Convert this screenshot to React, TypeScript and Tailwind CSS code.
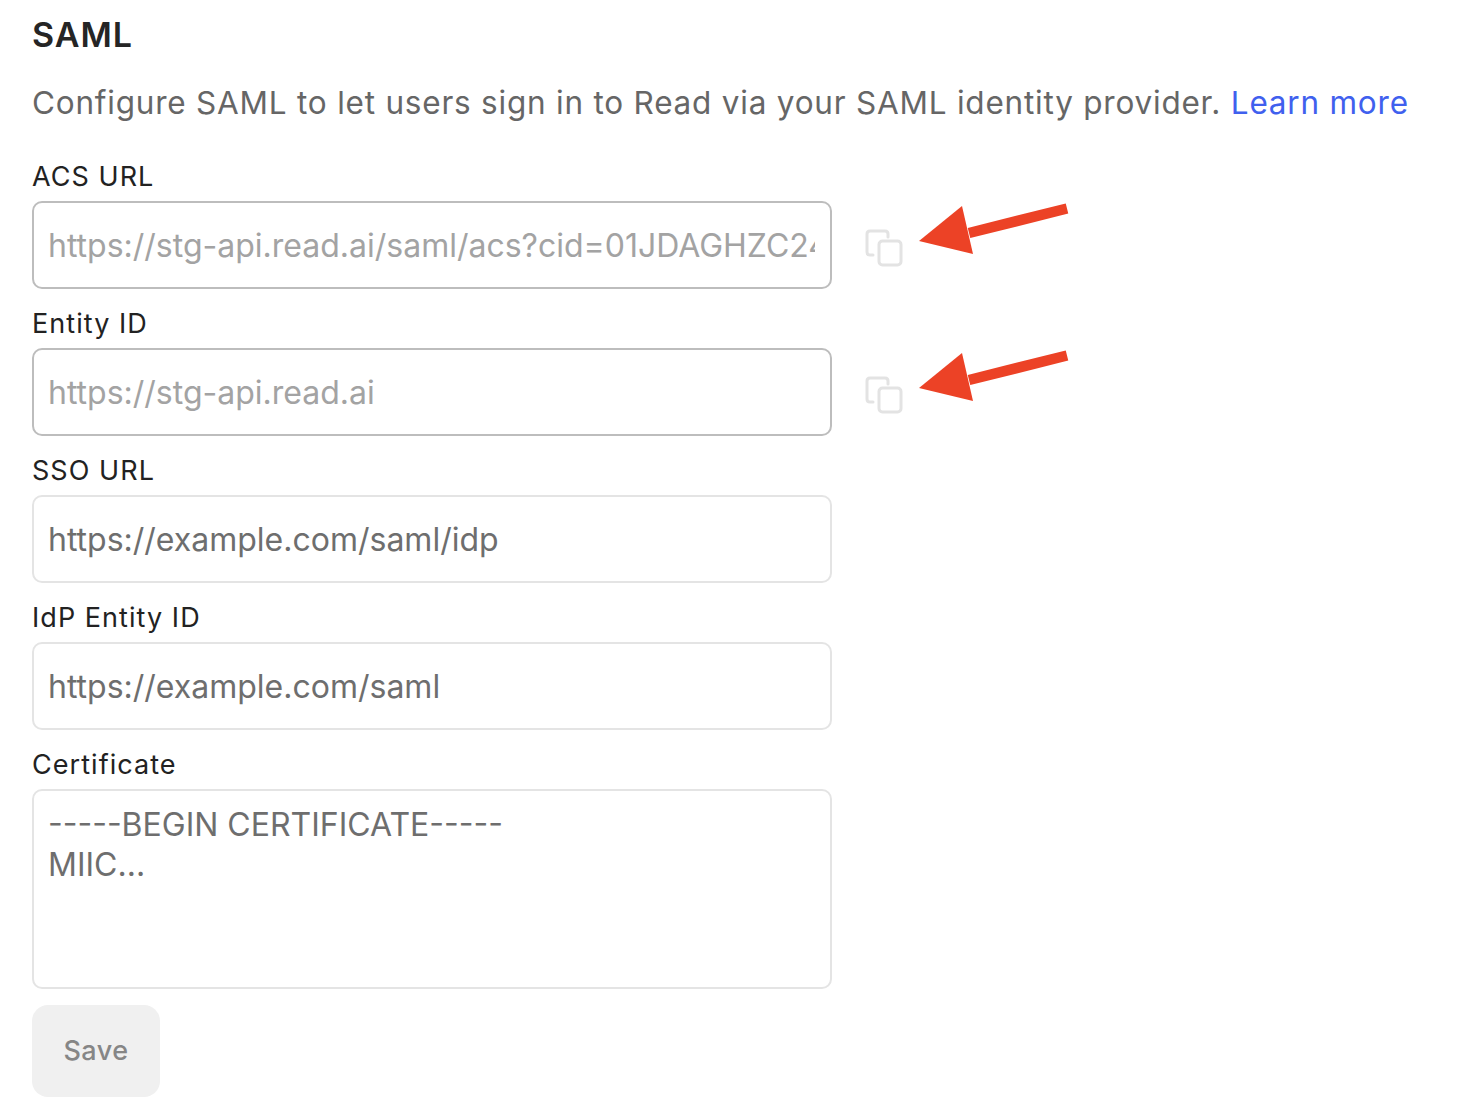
const Arrow = () => (
  <svg className="absolute left-[886px] top-[44px]" width="152" height="56" viewBox="0 0 152 56" fill="none">
    <path d="M149 5.500 L51 30" stroke="#ec4226" strokeWidth="10.5" />
    <path d="M1 38 L44 3 L55 51 Z" fill="#ec4226" />
  </svg>
);

const CopyIcon = () => (
  <svg width="38" height="38" viewBox="0 0 38 38" fill="none" stroke="#e3e3e3" strokeWidth="3" strokeLinejoin="round">
    <rect x="14" y="12" width="22" height="24" rx="3.5" />
    <path d="M8 26 H5 Q2 26 2 23 V5 Q2 2 5 2 H20 Q23 2 23 5 V8" strokeLinecap="round" />
  </svg>
);

const Field = ({ label, value, disabled }: { label: string; value: string; disabled?: boolean }) => (
  <div className="relative h-[147px]">
    <label className="block h-[42px] font-['Inter',sans-serif] text-[27px] leading-[35px] text-[#222] tracking-[1.05px]">
      {label}
    </label>
    <div className="flex items-center">
      <input
        readOnly
        value={value}
        className={`h-[88px] w-[800px] rounded-[10px] border-2 bg-white pl-[14px] pr-[15px] font-['Inter',sans-serif] text-[32px] outline-none ${disabled ? 'border-[#bdbdbd] text-[#a3a3a3]' : 'border-[#e4e4e4] text-[#6e6e6e]'}`}
      />
      {disabled && (
        <div className="ml-[33px] mt-[6px]">
          <CopyIcon />
        </div>
      )}
    </div>
    {disabled && <Arrow />}
  </div>
);

export default function App() {
  return (
    <div className="min-h-[1112px] w-[1484px] overflow-hidden bg-white pl-[32px] pt-[16px]">
      <h1 className="h-[38px] font-['Inter',sans-serif] text-[34px] font-semibold leading-[38px] text-[#252525] tracking-[0.95px]">SAML</h1>
      <p className="mt-[29px] whitespace-nowrap font-['Inter',sans-serif] text-[31.5px] leading-[40px] text-[#666] tracking-[0.78px]">
        Configure SAML to let users sign in to Read via your SAML identity provider.{' '}
        <a className="text-[#4060ee]">Learn more</a>
      </p>
      <div className="mt-[36px]">
        <Field label="ACS URL" value="https://stg-api.read.ai/saml/acs?cid=01JDAGHZC24WQ7RSTUVXYZ" disabled />
        <Field label="Entity ID" value="https://stg-api.read.ai" disabled />
        <Field label="SSO URL" value="https://example.com/saml/idp" />
        <Field label="IdP Entity ID" value="https://example.com/saml" />
        <label className="block h-[42px] font-['Inter',sans-serif] text-[27px] leading-[35px] text-[#222] tracking-[1.05px]">
          Certificate
        </label>
        <textarea
          readOnly
          value={'-----BEGIN CERTIFICATE-----\nMIIC...'}
          className="block h-[200px] w-[800px] resize-none rounded-[10px] border-2 border-[#e4e4e4] bg-white pl-[14px] pr-[15px] py-[14px] font-['Inter',sans-serif] text-[32px] leading-[40px] text-[#6e6e6e] outline-none"
        />
        <button className="mt-[16px] h-[92px] w-[128px] rounded-[16px] bg-[#f0f0f0] font-['Inter',sans-serif] text-[27px] font-medium text-[#868686] tracking-[0.5px]">
          Save
        </button>
      </div>
    </div>
  );
}
